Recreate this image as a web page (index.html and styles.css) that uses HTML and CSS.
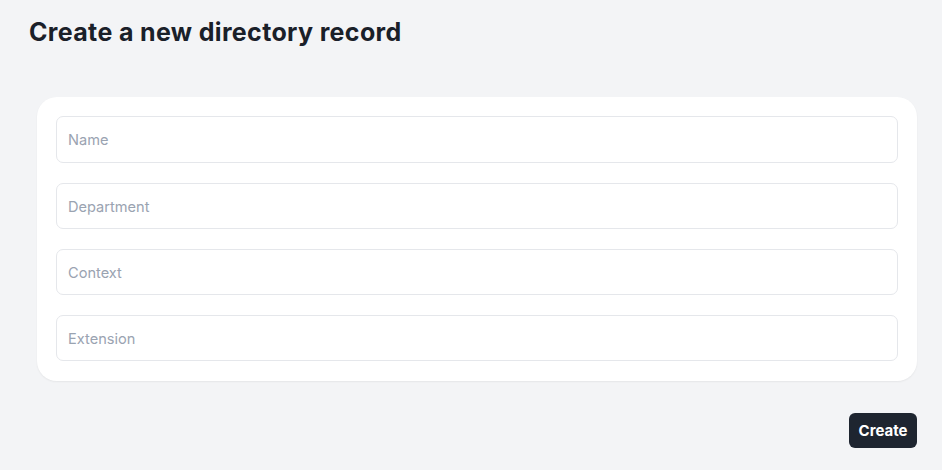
FILE: index.html
```html
<!DOCTYPE html>
<html lang="en">
<head>
<meta charset="utf-8">
<title>Create a new directory record</title>
<link rel="stylesheet" href="styles.css">
</head>
<body>
<main class="page">
  <h1 class="title">Create a new directory record</h1>
  <form class="form">
    <div class="card">
      <input class="field" type="text" placeholder="Name">
      <input class="field" type="text" placeholder="Department">
      <input class="field" type="text" placeholder="Context">
      <input class="field" type="text" placeholder="Extension">
    </div>
    <div class="actions">
      <button class="btn" type="button">Create</button>
    </div>
  </form>
</main>
</body>
</html>
```

FILE: styles.css
```css
html, body {
  margin: 0;
  padding: 0;
  background: #f3f4f6;
}
body {
  font-family: Inter, "Noto Sans", sans-serif;
  color: #1f2937;
}
.page {
  padding: 17px 25px 0 29px;
}
.title {
  margin: 0;
  font-size: 25px;
  font-weight: 700;
  line-height: 30px;
  color: #1a2029;
  letter-spacing: 0.35px;
}
.form {
  margin-top: 50px;
  padding-left: 8px;
}
.card {
  background: #fff;
  border-radius: 20px;
  box-shadow: 0 1px 2px rgba(0,0,0,0.06);
  padding: 19px 19px 20px;
  display: flex;
  flex-direction: column;
  gap: 20px;
}
.field {
  box-sizing: border-box;
  height: 46px;
  width: 100%;
  border: 1px solid #e5e7eb;
  border-radius: 7px;
  padding: 1px 11px 0;
  font-family: Inter, "Noto Sans", sans-serif;
  font-size: 14.6px;
  color: #1f2937;
  background: #fff;
  outline: none;
}
.field:first-child {
  height: 47px;
}
.field::placeholder {
  color: #9aa3b1;
}
.actions {
  display: flex;
  justify-content: flex-end;
  margin-top: 32px;
}
.btn {
  height: 35px;
  padding: 0 9.5px;
  border: none;
  border-radius: 6px;
  background: #1e2530;
  color: #fff;
  font-family: Inter, "Noto Sans", sans-serif;
  font-weight: 700;
  font-size: 15px;
  cursor: pointer;
}
```
